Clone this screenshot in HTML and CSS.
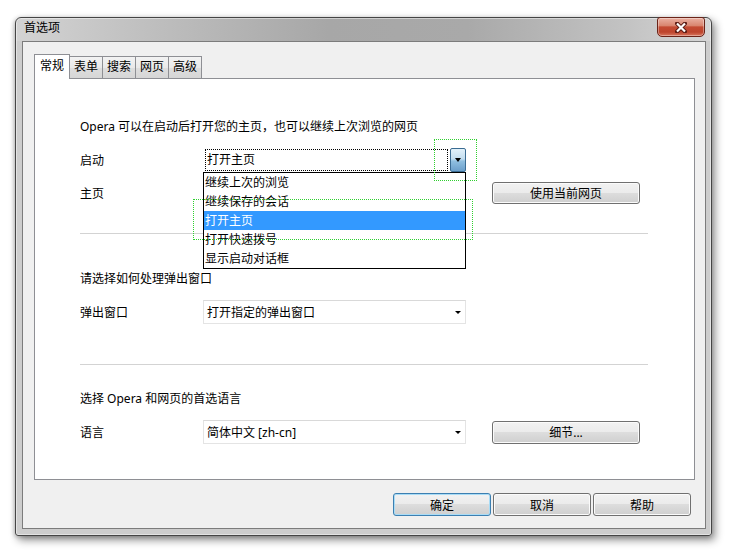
FILE: index.html
```html
<!DOCTYPE html>
<html>
<head>
	<meta charset="utf-8">
	<title>首选项</title>
	<link rel="stylesheet" href="styles.css">
</head>
<body>
	<div class="window">
		<div class="titlebar">
			<span class="title">首选项</span>
			<div class="close-btn">
				<svg width="12" height="11" viewBox="0 0 12 11">
					<path d="M2 1.5 L10 9.5 M10 1.5 L2 9.5" stroke="#5a1a12" stroke-width="4" stroke-linecap="round" fill="none"/>
					<path d="M2 1.5 L10 9.5 M10 1.5 L2 9.5" stroke="#fff" stroke-width="2.2" fill="none"/>
				</svg>
			</div>
		</div>

		<div class="client">
			<div class="tabs">
				<div class="tab active">常规</div>
				<div class="tab">表单</div>
				<div class="tab">搜索</div>
				<div class="tab">网页</div>
				<div class="tab">高级</div>
			</div>

			<div class="panel">
				<p class="intro">Opera 可以在启动后打开您的主页，也可以继续上次浏览的网页</p>

				<div class="row row-startup">
					<span class="label">启动</span>
					<div class="combo open">
						<div class="combo-text">打开主页</div>
						<div class="combo-btn"><span class="arrow"></span></div>
						<ul class="combo-list">
							<li>继续上次的浏览</li>
							<li>继续保存的会话</li>
							<li class="selected">打开主页</li>
							<li>打开快速拨号</li>
							<li>显示启动对话框</li>
						</ul>
						<!-- dotted hit boxes seen in the capture -->
						<div class="mark mark-btn"></div>
						<div class="mark mark-item"></div>
					</div>
				</div>

				<div class="row row-home">
					<span class="label">主页</span>
					<button class="btn btn-wide">使用当前网页</button>
				</div>

				<hr class="sep sep-first">

				<p class="heading heading-popup">请选择如何处理弹出窗口</p>
				<div class="row">
					<span class="label">弹出窗口</span>
					<div class="combo-closed">
						<span>打开指定的弹出窗口</span>
						<span class="arrow"></span>
					</div>
				</div>

				<hr class="sep sep-second">

				<p class="heading heading-lang">选择 Opera 和网页的首选语言</p>
				<div class="row">
					<span class="label">语言</span>
					<div class="combo-closed">
						<span>简体中文 [zh-cn]</span>
						<span class="arrow"></span>
					</div>
					<button class="btn btn-wide btn-tall">细节...</button>
				</div>
			</div>

			<div class="actions">
				<button class="btn btn-default">确定</button>
				<button class="btn">取消</button>
				<button class="btn">帮助</button>
			</div>
		</div>
	</div>
</body>
</html>
```

FILE: styles.css
```css
body {
	margin: 0;
	width: 730px;
	height: 552px;
	overflow: hidden;
	background: #fff;
	font-family: "Noto Sans", "Noto Sans CJK SC", sans-serif;
	font-size: 12px;
	color: #000;
}

/* window frame */
.window {
	margin: 17px 0 0 15px;
	width: 697px;
	height: 519px;
	box-sizing: border-box;
	border: 1px solid #454545;
	border-radius: 6px 6px 3px 3px;
	padding: 0 5px 6px 6px;
	display: flex;
	flex-direction: column;
	background:
		linear-gradient(to bottom, rgba(207, 207, 207, 0) 0, rgba(207, 207, 207, 0) 23px, #cdcdcd 23px),
		linear-gradient(to right, #d3d3d3 0%, #bebebe 20%, #a7a7a7 45%, #a9a9a9 65%, #c3c3c3 88%, #d6d6d6 100%);
	box-shadow: 3px 4px 9px rgba(0, 0, 0, 0.45), -1px 1px 4px rgba(0, 0, 0, 0.2), inset 0 0 0 1px rgba(255, 255, 255, 0.45);
}

.titlebar {
	height: 23px;
	display: flex;
	justify-content: space-between;
	align-items: flex-start;
}

.title {
	padding-left: 2px;
	line-height: 20px;
	font-size: 12px;
}

.close-btn {
	width: 48px;
	height: 20px;
	margin-top: -1px;
	margin-right: 1px;
	box-sizing: border-box;
	border: 1px solid #6b2318;
	border-radius: 3px 3px 5px 5px;
	background: linear-gradient(#eab0a2 0%, #d98670 42%, #c44b33 50%, #bd442d 78%, #d9775e 100%);
	box-shadow: inset 0 0 0 1px rgba(255, 255, 255, 0.35);
	display: flex;
	align-items: center;
	justify-content: center;
}

.client {
	flex: 1;
	box-sizing: border-box;
	background: #f0f0f0;
	border: 1px solid #7c7c7c;
	padding: 12px 10px 0 11px;
}

/* tabs */
.tabs {
	display: flex;
	align-items: flex-end;
	height: 25px;
	margin-bottom: -1px;
	position: relative;
	z-index: 1;
}

.tab {
	box-sizing: border-box;
	height: 22px;
	margin-bottom: 1px;
	margin-left: -1px;
	padding: 0 4px;
	border: 1px solid #8e8f94;
	border-bottom: none;
	background: linear-gradient(#f3f3f3, #e9e9e9 50%, #dedede 50%, #d6d6d6);
	line-height: 20px;
}

.tab.active {
	height: 25px;
	margin-bottom: 0;
	margin-left: 0;
	padding: 0 5px;
	background: #fff;
	line-height: 22px;
	position: relative;
	z-index: 2;
}

.panel {
	height: 402px;
	box-sizing: border-box;
	background: #fff;
	border: 1px solid #8e8f94;
	padding: 38px 46px 0 45px;
}

.intro,
.heading {
	margin: 0;
	line-height: 20px;
}

.heading-popup {
	margin-top: 35px;
}

.heading-lang {
	margin-top: 24px;
}

.row {
	display: grid;
	grid-template-columns: 123px 263px 174px;
	align-items: center;
	height: 24px;
	margin-top: 11px;
}

.row .btn {
	justify-self: end;
}

.row-home {
	margin-top: 9px;
}

.row-home .btn {
	grid-column: 3;
}

.sep {
	border: 0;
	height: 1px;
	background: #d3d3d3;
	margin: 0;
}

.sep-first {
	margin-top: 28px;
}

.sep-second {
	margin-top: 40px;
}

/* combo boxes */
.combo {
	position: relative;
	z-index: 5;
	height: 24px;
	display: flex;
	background: #fff;
}

.combo-text {
	flex: 1;
	margin: 1px 2px;
	border: 1px dotted #000;
	padding-left: 1px;
	line-height: 20px;
}

.combo-btn {
	width: 16px;
	height: 24px;
	box-sizing: border-box;
	border: 1px solid #3a6b92;
	border-radius: 2px;
	background: linear-gradient(#e2f1fa 0%, #c3def0 45%, #8fbfe0 55%, #6b9fcb 100%);
	display: flex;
	align-items: center;
	justify-content: center;
}

.arrow {
	width: 0;
	height: 0;
	border-left: 3px solid transparent;
	border-right: 3px solid transparent;
	border-top: 4px solid #000;
}

.combo-list {
	position: absolute;
	top: 24px;
	left: 0;
	width: 263px;
	box-sizing: border-box;
	margin: 0;
	padding: 0;
	list-style: none;
	background: #fff;
	border: 1px solid #000;
}

.combo-list li {
	height: 19px;
	line-height: 19px;
	padding-left: 1px;
}

.combo-list li.selected {
	background: #3399ff;
	color: #fff;
}

.mark {
	position: absolute;
	z-index: 6;
	border: 1px dotted #2fd02f;
	pointer-events: none;
}

.mark-btn {
	left: 231px;
	top: -9px;
	width: 41px;
	height: 40px;
}

.mark-item {
	left: -10px;
	top: 51px;
	width: 278px;
	height: 39px;
}

.combo-closed {
	height: 24px;
	box-sizing: border-box;
	border: 1px solid #e4e4e4;
	border-top-color: #d9d9d9;
	background: #fff;
	padding: 0 4px 0 3px;
	display: flex;
	align-items: center;
	justify-content: space-between;
}

.combo-closed .arrow {
	border-top-width: 3px;
}

/* buttons */
.btn {
	width: 98px;
	height: 23px;
	box-sizing: border-box;
	padding: 0;
	border: 1px solid #707070;
	border-radius: 3px;
	background: linear-gradient(#f2f2f2 0%, #ebebeb 49%, #dddddd 50%, #cfcfcf 100%);
	box-shadow: inset 0 0 0 1px #fbfbfb;
	font-family: inherit;
	font-size: 12px;
	color: #000;
}

.btn-wide {
	width: 148px;
	height: 22px;
}

.btn-tall {
	height: 23px;
}

.btn-default {
	border-color: #3c7fb1;
	box-shadow: inset 0 0 0 1px #a9dcf6;
}

.actions {
	display: flex;
	justify-content: flex-end;
	gap: 2px;
	margin-top: 13px;
	margin-right: 4px;
}
```
